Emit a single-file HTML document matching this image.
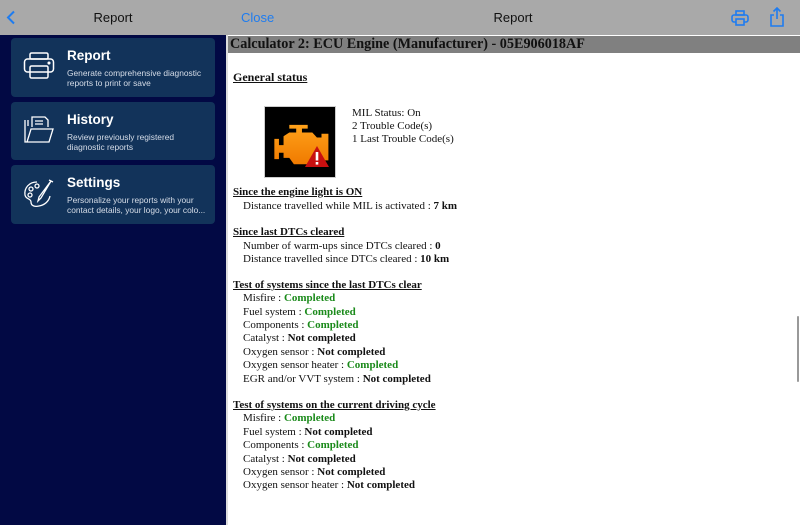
<!DOCTYPE html>
<html><head><meta charset="utf-8"><style>
*{margin:0;padding:0;box-sizing:border-box}
body{width:800px;height:525px;overflow:hidden;position:relative;background:#fff;font-family:"Liberation Sans",sans-serif}
#side{position:absolute;left:0;top:0;width:226px;height:525px;background:#020944}
.hdr{position:absolute;top:0;height:35px;background:#a9a9a9}
.card{position:absolute;left:11px;width:204px;background:#12335a;border-radius:4px;color:#fff}
.card .t{position:absolute;left:56px;top:10px;font-size:13.5px;font-weight:bold}
.card .d{position:absolute;left:56px;top:30px;font-size:8.4px;line-height:10px;color:#d6dde8;white-space:nowrap}
.card svg{position:absolute;left:12px;top:13px}
#main{position:absolute;left:226px;top:35px;width:574px;height:490px;border-left:2px solid #ddd;font-family:"Liberation Serif",serif;color:#111}
.l{position:absolute;font-size:11px;white-space:nowrap;line-height:13px}
.h{font-weight:bold;text-decoration:underline}
.i{left:15px}
b{font-weight:bold}
.g{color:#1a8a1a;font-weight:bold}
</style></head><body>
<div id="side">
<div class="hdr" style="left:0;width:226px">
<svg style="position:absolute;left:6px;top:10px" width="10" height="15" viewBox="0 0 10 15"><path d="M8 1.5L2 7.5L8 13.5" stroke="#1e7cf0" stroke-width="2" fill="none"/></svg>
<div style="position:absolute;left:0;width:226px;top:10px;text-align:center;font-size:13px;color:#111">Report</div></div>
<div class="card" style="top:38px;height:59px">
<svg width="32" height="30" viewBox="0 0 32 30" fill="none" stroke="#fff" stroke-width="1.5"><rect x="7" y="2" width="18" height="6" rx="1.5"/><rect x="1.5" y="8" width="29" height="13" rx="3"/><rect x="7" y="15" width="18" height="12" rx="1.5"/><circle cx="26" cy="12" r="0.8" fill="#fff"/></svg>
<div class="t">Report</div><div class="d">Generate comprehensive diagnostic<br>reports to print or save</div></div>
<div class="card" style="top:102px;height:58px">
<svg width="32" height="30" viewBox="0 0 32 30" fill="none" stroke="#fff" stroke-width="1.3"><path d="M2 5V27H26L30 14H8L4 27"/><path d="M9 12V2H22L25 5V12M12 6H20M12 9H20"/><path d="M5 11V5"/></svg>
<div class="t">History</div><div class="d">Review previously registered<br>diagnostic reports</div></div>
<div class="card" style="top:165px;height:59px">
<svg width="32" height="32" viewBox="0 0 32 32" fill="none" stroke="#fff" stroke-width="1.3"><path d="M14 4C6 4 1 10 2 17C3 22 8 20 8 24C8 28 12 29 16 28C22 27 26 23 27 18"/><circle cx="8" cy="11" r="2"/><circle cx="14" cy="8" r="2"/><circle cx="7" cy="17" r="2"/><path d="M28 3L18 20L15 23L16 19Z"/><path d="M26 2L30 4"/></svg>
<div class="t">Settings</div><div class="d">Personalize your reports with your<br>contact details, your logo, your colo...</div></div>
</div>
<div class="hdr" style="left:226px;width:574px">
<div style="position:absolute;left:15px;top:10px;font-size:13px;color:#1e7cf0">Close</div>
<div style="position:absolute;left:0;width:574px;top:10px;text-align:center;font-size:13px;color:#111">Report</div>
<svg style="position:absolute;left:505px;top:10px" width="18" height="16" viewBox="0 0 18 16" fill="none" stroke="#1e7cf0" stroke-width="1.6"><rect x="5" y="1" width="8" height="4"/><rect x="1" y="5" width="16" height="7" rx="2"/><rect x="5" y="9" width="8" height="6" fill="#a9a9a9"/></svg>
<svg style="position:absolute;left:543px;top:7px" width="16" height="20" viewBox="0 0 16 20" fill="none" stroke="#1e7cf0" stroke-width="1.6"><path d="M8 1V12M4.5 4.5L8 1L11.5 4.5"/><path d="M5 8H2V19H14V8H11"/></svg>
</div>
<div id="main">
<div style="position:absolute;left:0;top:1px;width:572px;height:17px;background:#808080;font-weight:bold;font-size:14.2px;line-height:17px;padding-left:2px;color:#111;letter-spacing:0">Calculator 2: ECU Engine (Manufacturer) - 05E906018AF</div>
<div class="l h" style="left:5px;top:36px;font-size:12px">General status</div>
<div style="position:absolute;left:36px;top:71px;width:72px;height:72px;background:#000;border:1px solid #ccc">
<svg width="70" height="70" viewBox="0 0 70 70"><defs><linearGradient id="og" x1="0" y1="0" x2="0" y2="1"><stop offset="0" stop-color="#ffa21a"/><stop offset="1" stop-color="#f07a00"/></linearGradient></defs>
<g transform="translate(-1,-5) scale(1.15,1.27)"><path fill="url(#og)" d="M22 18H38V21H33V24H42L46 28H50V25H56V46H50V43H46L42 49H26L22 44H17V40H13V45H9V29H13V34H17V27L22 24H28V21H22Z"/></g>
<path d="M52 39L64 60H40Z" fill="#c81010"/><rect x="50.7" y="45" width="2.6" height="8.5" fill="#fff"/><rect x="50.7" y="55" width="2.6" height="2.6" fill="#fff"/></svg></div>
<div class="l" style="left:124px;top:72px">MIL Status: On</div>
<div class="l" style="left:124px;top:85px">2 Trouble Code(s)</div>
<div class="l" style="left:124px;top:98px">1 Last Trouble Code(s)</div>
<div class="l h" style="left:5px;top:151px">Since the engine light is ON</div>
<div class="l i" style="top:165px">Distance travelled while MIL is activated : <b>7 km</b></div>
<div class="l h" style="left:5px;top:191px">Since last DTCs cleared</div>
<div class="l i" style="top:205px">Number of warm-ups since DTCs cleared : <b>0</b></div>
<div class="l i" style="top:218px">Distance travelled since DTCs cleared : <b>10 km</b></div>
<div class="l h" style="left:5px;top:244px">Test of systems since the last DTCs clear</div>
<div class="l i" style="top:257px">Misfire : <span class="g">Completed</span></div>
<div class="l i" style="top:271px">Fuel system : <span class="g">Completed</span></div>
<div class="l i" style="top:284px">Components : <span class="g">Completed</span></div>
<div class="l i" style="top:297px">Catalyst : <b>Not completed</b></div>
<div class="l i" style="top:311px">Oxygen sensor : <b>Not completed</b></div>
<div class="l i" style="top:324px">Oxygen sensor heater : <span class="g">Completed</span></div>
<div class="l i" style="top:338px">EGR and/or VVT system : <b>Not completed</b></div>
<div class="l h" style="left:5px;top:364px">Test of systems on the current driving cycle</div>
<div class="l i" style="top:377px">Misfire : <span class="g">Completed</span></div>
<div class="l i" style="top:391px">Fuel system : <b>Not completed</b></div>
<div class="l i" style="top:404px">Components : <span class="g">Completed</span></div>
<div class="l i" style="top:418px">Catalyst : <b>Not completed</b></div>
<div class="l i" style="top:431px">Oxygen sensor : <b>Not completed</b></div>
<div class="l i" style="top:444px">Oxygen sensor heater : <b>Not completed</b></div>
<div style="position:absolute;left:569px;top:281px;width:2px;height:66px;background:#999;border-radius:1px"></div>
</div>
</body></html>
